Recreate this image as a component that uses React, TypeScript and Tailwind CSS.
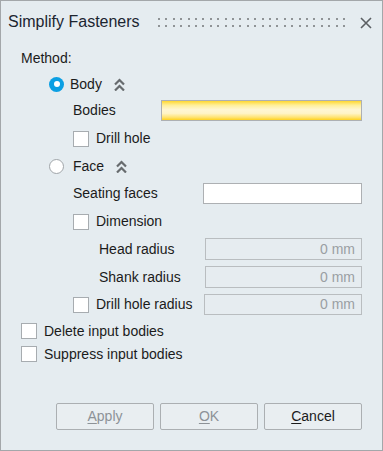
import React from "react";

const Chevrons = () => (
  <svg width="11" height="13" viewBox="0 0 11 13" className="block">
    <polyline points="1,6.5 5.5,2 10,6.5" fill="none" stroke="#676b6e" strokeWidth="2.2" />
    <polyline points="1,12.5 5.5,8 10,12.5" fill="none" stroke="#676b6e" strokeWidth="2.2" />
  </svg>
);

const Check = () => (
  <div className="w-[16px] h-[16px] border border-[#a7acb0] bg-white shrink-0" />
);

const Disabled = ({ w }: { w: string }) => (
  <div
    className={`ml-auto ${w} h-[22px] border border-[#b9bdc0] bg-[#e6ecf0] flex items-center justify-end pr-[6px] text-[14px] text-[#9a9fa3]`}
  >
    0 mm
  </div>
);

const Grip = () => {
  const dots = Array.from({ length: 26 }, (_, i) => i);
  return (
    <svg width="192" height="10" viewBox="0 0 192 10" className="block">
      {dots.map((i) => (
        <g key={i}>
          <rect x={Math.round(i * 7.4)} y={0} width={2} height={2} fill="#8f9396" />
          <rect x={Math.round(i * 7.4)} y={7} width={2} height={2} fill="#8f9396" />
        </g>
      ))}
    </svg>
  );
};

export default function App() {
  return (
    <div className="w-[383px] h-[451px] border border-[#a3a7aa] bg-[#e5ecf0] flex flex-col font-['Liberation_Sans',Arial,sans-serif] text-[14px] text-[#1b1b1b] overflow-hidden">
      {/* title bar */}
      <div className="h-[42px] flex items-center pl-[7px] pr-[10px] shrink-0">
        <span className="text-[16px] text-[#1c2530]">Simplify Fasteners</span>
        <div className="ml-[18px] mt-[1px]">
          <Grip />
        </div>
        <svg width="12" height="12" viewBox="0 0 12 12" className="ml-auto mt-[1px]">
          <path d="M1 1 L11 11 M11 1 L1 11" stroke="#5b5f63" strokeWidth="1.6" />
        </svg>
      </div>

      <div className="flex flex-col pl-[20px] pr-[20px]">
        <div className="h-[30px] flex items-center">Method:</div>

        <div className="h-[22px] flex items-center pl-[28px]">
          <div className="w-[15px] h-[15px] rounded-full bg-[#0b9fe3] flex items-center justify-center shrink-0">
            <div className="w-[6px] h-[6px] rounded-full bg-white" />
          </div>
          <span className="ml-[6px]">Body</span>
          <div className="ml-[12px]">
            <Chevrons />
          </div>
        </div>

        <div className="h-[31px] flex items-center pl-[52px]">
          <span>Bodies</span>
          <div className="ml-auto w-[201px] h-[21px] border border-[#adb0b3] bg-[linear-gradient(to_bottom,#ffd730_0%,#ffef9a_22%,#fff6d2_45%,#fff4c6_65%,#ffe476_85%,#ffd21e_100%)]" />
        </div>

        <div className="h-[25px] flex items-center pl-[52px]">
          <Check />
          <span className="ml-[7px]">Drill hole</span>
        </div>

        <div className="h-[30px] flex items-center pl-[28px]">
          <div className="w-[15px] h-[15px] rounded-full border border-[#a0a5a9] bg-white shrink-0" />
          <span className="ml-[9px]">Face</span>
          <div className="ml-[12px]">
            <Chevrons />
          </div>
        </div>

        <div className="h-[25px] flex items-center pl-[52px]">
          <span>Seating faces</span>
          <div className="ml-auto w-[159px] h-[21px] border border-[#adb0b3] bg-white" />
        </div>

        <div className="h-[31px] flex items-center pl-[52px]">
          <Check />
          <span className="ml-[7px]">Dimension</span>
        </div>

        <div className="h-[24px] flex items-center pl-[78px]">
          <span>Head radius</span>
          <Disabled w="w-[157px]" />
        </div>

        <div className="h-[32px] flex items-center pl-[78px]">
          <span>Shank radius</span>
          <Disabled w="w-[157px]" />
        </div>

        <div className="h-[23px] flex items-center pl-[52px]">
          <Check />
          <span className="ml-[7px]">Drill hole radius</span>
          <div className="ml-auto w-[158px] h-[21px] border border-[#b9bdc0] bg-[#e6ecf0] flex items-center justify-end pr-[6px] text-[14px] text-[#9a9fa3]">
            0 mm
          </div>
        </div>

        <div className="h-[30px] flex items-center">
          <Check />
          <span className="ml-[7px]">Delete input bodies</span>
        </div>

        <div className="h-[16px] flex items-center">
          <Check />
          <span className="ml-[7px]">Suppress input bodies</span>
        </div>
      </div>

      <div className="mt-[41px] flex justify-end gap-[6px] pr-[20px]">
        <button className="w-[98px] h-[27px] border border-[#abafb2] rounded-[2px] bg-[#e9eef1] text-[#8d9297] text-[14px]">
          <span className="underline underline-offset-2">A</span>pply
        </button>
        <button className="w-[98px] h-[27px] border border-[#abafb2] rounded-[2px] bg-[#e9eef1] text-[#8d9297] text-[14px]">
          <span className="underline underline-offset-2">O</span>K
        </button>
        <button className="w-[98px] h-[27px] border border-[#abafb2] rounded-[2px] bg-[#e9eef1] text-[#1b1b1b] text-[14px]">
          <span className="underline underline-offset-2">C</span>ancel
        </button>
      </div>
    </div>
  );
}
